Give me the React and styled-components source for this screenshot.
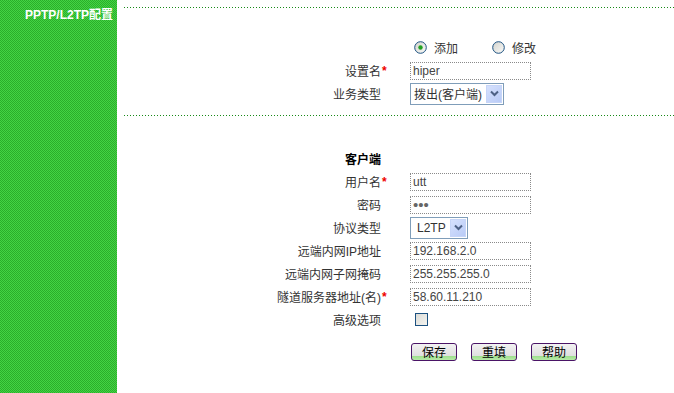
import React from "react";
import styled, { createGlobalStyle } from "styled-components";

const Global = createGlobalStyle`
  html, body { margin: 0; padding: 0; background: #fff; }
  body { font-family: "Liberation Sans", "Noto Sans CJK SC", sans-serif; font-size: 12px; }
`;

const Page = styled.div`
  display: flex;
  height: 393px;
  width: 674px;
  overflow: hidden;
`;

const Sidebar = styled.div`
  width: 117px;
  flex: 0 0 117px;
  background-color: #36c436;
  background-image: repeating-conic-gradient(#44d444 0 25%, #2aae2a 0 50%);
  background-size: 2px 2px;
`;

const SideTitle = styled.div`
  color: #fff;
  font-weight: bold;
  font-size: 12px;
  line-height: 13px;
  text-align: right;
  padding: 9px 4px 0 0;
  white-space: nowrap;
`;

const Main = styled.div`
  flex: 1;
  padding: 7px 0 0 7px;
  display: flex;
  flex-direction: column;
`;

const Divider = styled.div`
  height: 1px;
  margin-top: ${(p) => p.$top || 0}px;
  background-image: linear-gradient(to right, #178a17 1px, transparent 1px);
  background-size: 3px 1px;
`;

const Form = styled.div`
  display: grid;
  grid-template-columns: 257px 29px 1fr;
  grid-auto-rows: 23px;
  align-items: center;
  margin-top: ${(p) => p.$top || 0}px;
`;

const Label = styled.div`
  grid-column: 1;
  text-align: right;
  color: ${(p) => (p.$bold ? "#000" : "#333")};
  white-space: nowrap;
  font-weight: ${(p) => (p.$bold ? "bold" : "normal")};
`;

const Star = styled.div`
  grid-column: 2;
  color: #e00;
  font-weight: bold;
  padding-left: 1px;
  line-height: 12px;
`;

const Control = styled.div`
  grid-column: 3;
  display: flex;
  align-items: center;
`;

const TextInput = styled.input`
  box-sizing: border-box;
  width: 121px;
  height: 18px;
  border: 1px dotted #8a8a8a;
  padding: 0 2px;
  font-family: "Liberation Sans", sans-serif;
  font-size: ${(p) => (p.type === "password" ? "15px" : "12px")};
  color: ${(p) => (p.type === "password" ? "#666" : "#444")};
  outline: none;
  background: #fff;
  letter-spacing: ${(p) => (p.type === "password" ? "0px" : "normal")};
`;

const SelectBox = styled.div`
  box-sizing: border-box;
  width: ${(p) => p.$w}px;
  height: 22px;
  border: 1px solid #7f9db9;
  display: flex;
  align-items: center;
  justify-content: space-between;
  padding: 0 1px 0 ${(p) => p.$pl || 3}px;
  color: #333;
  background: #fff;
  white-space: nowrap;
`;

const ArrowBtn = styled.span`
  width: 16px;
  height: 18px;
  box-sizing: border-box;
  border: 1px solid #c6d5f8;
  background: linear-gradient(135deg, #d6e1fd 0%, #b9cbf7 100%);
  display: flex;
  align-items: center;
  justify-content: center;
`;

const RadioGroup = styled.div`
  display: flex;
  align-items: center;
  padding-left: 4px;
`;

const RadioItem = styled.label`
  display: flex;
  align-items: center;
  gap: 7px;
  color: #333;
  margin-right: ${(p) => p.$mr || 0}px;
`;

const Check = styled.span`
  display: inline-block;
  width: 13px;
  height: 13px;
  box-sizing: border-box;
  border: 1px solid #1c5180;
  margin-left: 5px;
  background: linear-gradient(135deg, #dcdcd7 0%, #f3f3ef 100%);
`;

const Buttons = styled.div`
  display: flex;
  gap: 14px;
  margin: 12px 0 0 287px;
`;

const Button = styled.button`
  box-sizing: border-box;
  width: 46px;
  height: 18px;
  padding: 0;
  border: 1px solid #4a1466;
  border-radius: 3px;
  background: linear-gradient(to bottom, #f2f2f2 0%, #dedede 78%, #9fe08f 78%, #b8eaa8 100%);
  font-family: "Noto Sans CJK SC", sans-serif;
  font-size: 12px;
  line-height: 14px;
  color: #000;
`;

const Radio = ({ checked }) => (
  <svg width="13" height="13" viewBox="0 0 13 13">
    <defs>
      <linearGradient id={checked ? "rg1" : "rg2"} x1="0" y1="0" x2="1" y2="1">
        <stop offset="0" stopColor="#d2d2cc" />
        <stop offset="1" stopColor="#fbfbf9" />
      </linearGradient>
    </defs>
    <circle cx="6.5" cy="6.5" r="5.8" fill={`url(#${checked ? "rg1" : "rg2"})`} stroke="#1c5180" strokeWidth="1" />
    {checked && <circle cx="6.5" cy="6.5" r="2.2" fill="#21a121" />}
  </svg>
);

const Chevron = () => (
  <svg width="9" height="7" viewBox="0 0 9 7">
    <path d="M1 1.5 L4.5 5 L8 1.5" fill="none" stroke="#4d6185" strokeWidth="2" />
  </svg>
);

export default function App() {
  return (
    <>
      <Global />
      <Page>
        <Sidebar>
          <SideTitle>PPTP/L2TP配置</SideTitle>
        </Sidebar>
        <Main>
          <Divider />
          <Form $top={28}>
            <Control>
              <RadioGroup>
                <RadioItem $mr={34}>
                  <Radio checked />
                  添加
                </RadioItem>
                <RadioItem>
                  <Radio />
                  修改
                </RadioItem>
              </RadioGroup>
            </Control>
            <Label>设置名</Label>
            <Star>*</Star>
            <Control>
              <TextInput defaultValue="hiper" />
            </Control>
            <Label>业务类型</Label>
            <Control>
              <SelectBox $w={94}>
                拨出(客户端)
                <ArrowBtn>
                  <Chevron />
                </ArrowBtn>
              </SelectBox>
            </Control>
          </Form>
          <Divider $top={10} />
          <Form $top={31}>
            <Label $bold>客户端</Label>
          </Form>
          <Form>
            <Label>用户名</Label>
            <Star>*</Star>
            <Control>
              <TextInput defaultValue="utt" />
            </Control>
            <Label>密码</Label>
            <Control>
              <TextInput type="password" defaultValue="utt" />
            </Control>
            <Label>协议类型</Label>
            <Control>
              <SelectBox $w={58} $pl={6}>
                L2TP
                <ArrowBtn>
                  <Chevron />
                </ArrowBtn>
              </SelectBox>
            </Control>
            <Label>远端内网IP地址</Label>
            <Control>
              <TextInput defaultValue="192.168.2.0" />
            </Control>
            <Label>远端内网子网掩码</Label>
            <Control>
              <TextInput defaultValue="255.255.255.0" />
            </Control>
            <Label>隧道服务器地址(名)</Label>
            <Star>*</Star>
            <Control>
              <TextInput defaultValue="58.60.11.210" />
            </Control>
            <Label>高级选项</Label>
            <Control>
              <Check />
            </Control>
          </Form>
          <Buttons>
            <Button>保存</Button>
            <Button>重填</Button>
            <Button>帮助</Button>
          </Buttons>
        </Main>
      </Page>
    </>
  );
}
